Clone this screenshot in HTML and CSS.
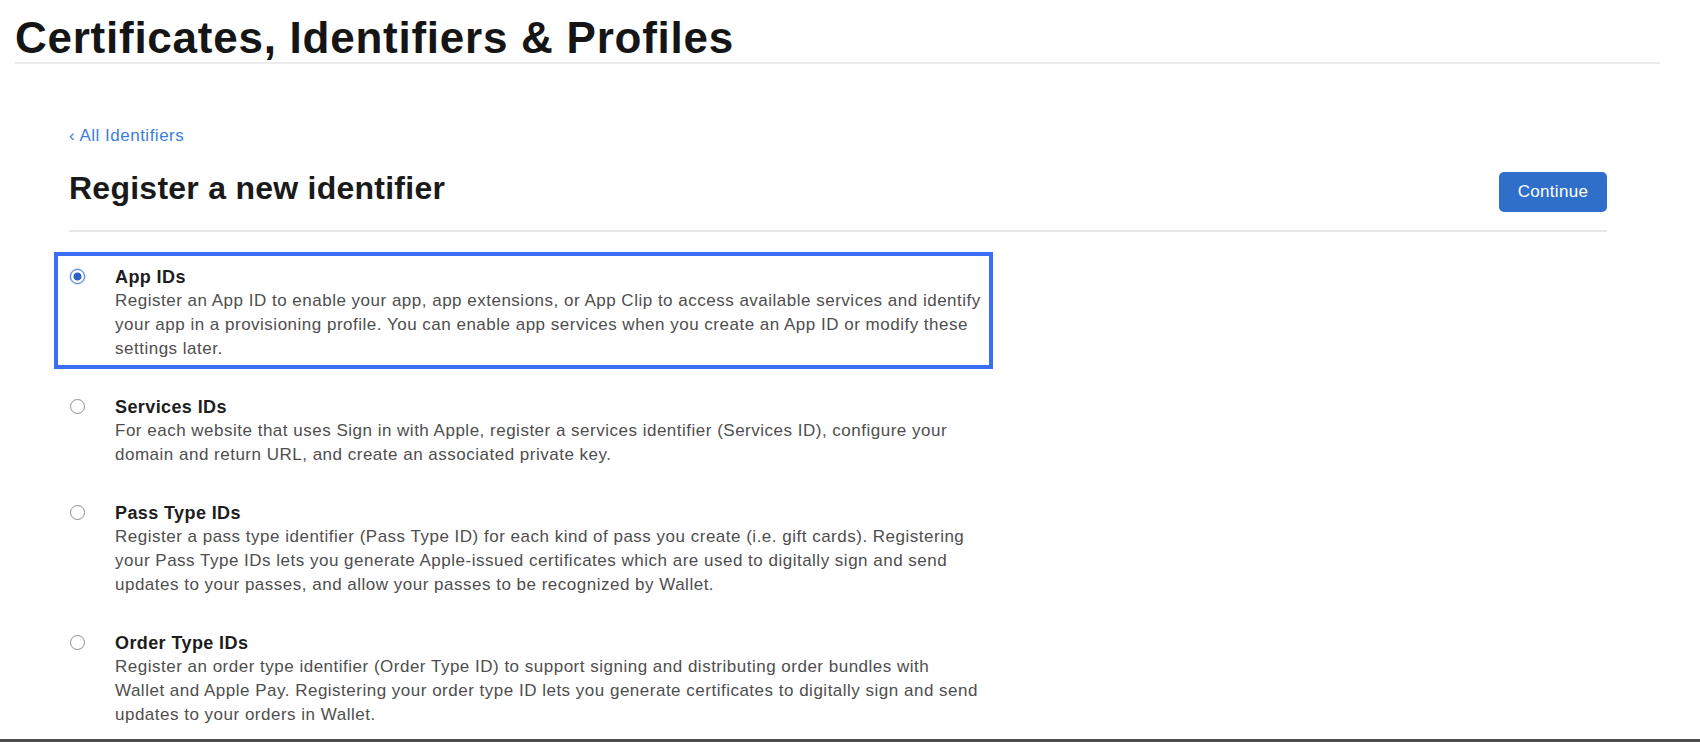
FILE: index.html
```html
<!DOCTYPE html>
<html lang="en">
<head>
<meta charset="utf-8">
<title>Certificates, Identifiers &amp; Profiles</title>
<link rel="stylesheet" href="styles.css">
</head>
<body>
<div class="page">
  <header class="top">
    <h1 class="top-title">Certificates, Identifiers &amp; Profiles</h1>
  </header>
  <main class="main">
    <a class="back-link" href="#">&#8249; All Identifiers</a>
    <div class="title-row">
      <h2 class="page-title">Register a new identifier</h2>
      <button class="btn-continue" type="button">Continue</button>
    </div>
    <ul class="options">
      <li class="option selected">
        <span class="radio checked"></span>
        <div class="option-text">
          <div class="option-name">App IDs</div>
          <p class="option-desc">Register an App ID to enable your app, app extensions, or App Clip to access available services and identify your app in a provisioning profile. You can enable app services when you create an App ID or modify these settings later.</p>
        </div>
      </li>
      <li class="option">
        <span class="radio"></span>
        <div class="option-text">
          <div class="option-name">Services IDs</div>
          <p class="option-desc">For each website that uses Sign in with Apple, register a services identifier (Services ID), configure your domain and return URL, and create an associated private key.</p>
        </div>
      </li>
      <li class="option">
        <span class="radio"></span>
        <div class="option-text">
          <div class="option-name">Pass Type IDs</div>
          <p class="option-desc">Register a pass type identifier (Pass Type ID) for each kind of pass you create (i.e. gift cards). Registering your Pass Type IDs lets you generate Apple-issued certificates which are used to digitally sign and send updates to your passes, and allow your passes to be recognized by Wallet.</p>
        </div>
      </li>
      <li class="option">
        <span class="radio"></span>
        <div class="option-text">
          <div class="option-name">Order Type IDs</div>
          <p class="option-desc">Register an order type identifier (Order Type ID) to support signing and distributing order bundles with Wallet and Apple Pay. Registering your order type ID lets you generate certificates to digitally sign and send updates to your orders in Wallet.</p>
        </div>
      </li>
    </ul>
  </main>
</div>
</body>
</html>
```

FILE: styles.css
```css
* { box-sizing: border-box; }

html, body {
  margin: 0;
  padding: 0;
  background: #ffffff;
}

body {
  font-family: "Liberation Sans", Arial, sans-serif;
  color: #1d1d1f;
}

.page {
  height: 742px;
  overflow: hidden;
  border-bottom: 3px solid #4d4d4d;
}

.top {
  padding: 0 40px 0 15px;
}

.top-title {
  margin: 0;
  width: 1645px;
  padding-top: 13px;
  font-size: 44px;
  line-height: 49px;
  font-weight: 700;
  letter-spacing: 0.75px;
  color: #151515;
  border-bottom: 2px solid #ececec;
}

.main {
  width: 1607px;
  padding: 60px 0 0 69px;
}

.back-link {
  display: block;
  font-size: 17px;
  line-height: 24px;
  letter-spacing: 0.5px;
  color: #3d80d8;
  text-decoration: none;
}

.title-row {
  display: flex;
  justify-content: space-between;
  align-items: flex-start;
  margin-top: 20px;
  padding-bottom: 18px;
  border-bottom: 2px solid #e8e8e8;
}

.page-title {
  margin: 0;
  font-size: 32px;
  line-height: 40px;
  font-weight: 700;
  letter-spacing: 0.25px;
  color: #1a1a1a;
}

.btn-continue {
  margin-top: 4px;
  width: 108px;
  height: 40px;
  border: 0;
  border-radius: 5px;
  background: #2f6fca;
  color: #ffffff;
  font-family: "Liberation Sans", Arial, sans-serif;
  font-size: 17px;
  letter-spacing: 0.3px;
  padding: 0;
}

.options {
  list-style: none;
  margin: 20px 0 0 -15px;
  padding: 0;
  width: 939px;
  display: flex;
  flex-direction: column;
  gap: 13px;
}

.option {
  display: flex;
  align-items: flex-start;
  border: 4px solid transparent;
  padding: 9px 4px 4px 12px;
}

.option.selected {
  border-color: #3a6ef4;
}

.radio {
  flex: none;
  width: 15px;
  height: 15px;
  margin-top: 4px;
  border-radius: 50%;
  border: 1px solid #8e8e8e;
  background: #ffffff;
}

.radio.checked {
  border: 1.5px solid #3a6fd8;
  background: radial-gradient(circle, #2c62cc 0 3.6px, #ffffff 4.4px);
  box-shadow: 0 0 0 1px rgba(80, 130, 230, 0.25);
}

.option-text {
  margin-left: 30px;
  width: 868px;
}

.option-name {
  font-size: 18px;
  line-height: 24px;
  font-weight: 700;
  letter-spacing: 0.4px;
  color: #1d1d1f;
}

.option-desc {
  margin: 0;
  font-size: 17px;
  line-height: 24px;
  letter-spacing: 0.5px;
  color: #4e4e4e;
}
```
